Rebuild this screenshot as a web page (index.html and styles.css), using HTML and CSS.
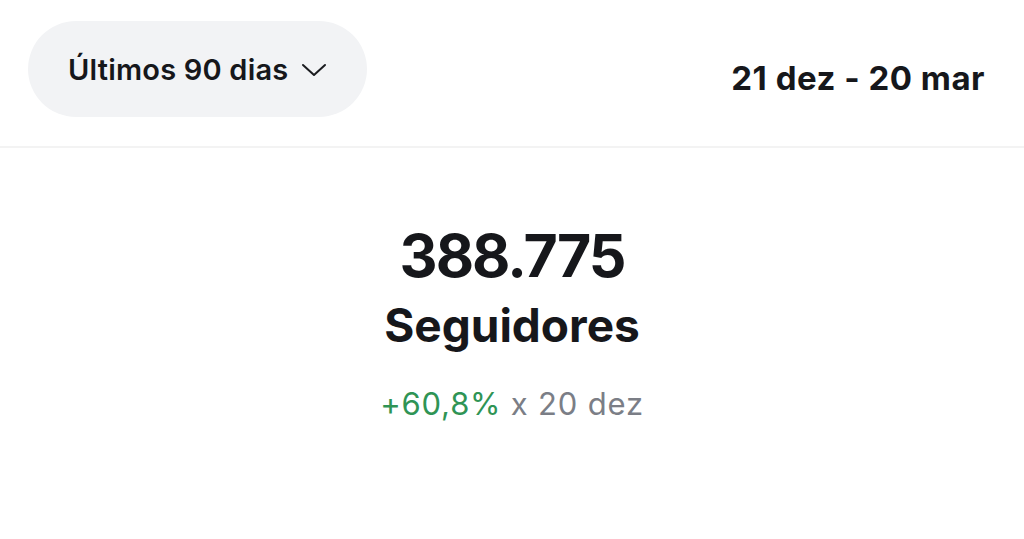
FILE: index.html
```html
<!DOCTYPE html>
<html lang="pt">
    <head>
        <meta charset="UTF-8">
        <title>Seguidores</title>
        <link rel="stylesheet" href="styles.css">
    </head>
    <body>

        <div class="topbar">
            <button class="range">
                <span>Últimos 90 dias</span>
                <svg class="chev" width="26" height="14" viewBox="0 0 26 14">
                    <path d="M2 2 L13 12 L24 2" fill="none" stroke="#1a1b1f" stroke-width="2" stroke-linecap="round" stroke-linejoin="round"/>
                </svg>
            </button>
            <div class="dates">21 dez - 20 mar</div>
        </div>

        <div class="stat">
            <div class="count">388.775</div>
            <div class="label">Seguidores</div>
            <div class="change"><span class="up">+60,8%</span> x 20 dez</div>
        </div>

    </body>
</html>
```

FILE: styles.css
```css
body {
    margin: 0;
    font-family: Inter, 'Noto Sans', sans-serif;
    background: #fff;
    color: #16171b;
}
.topbar {
    display: flex;
    justify-content: space-between;
    align-items: center;
    height: 148px;
    padding: 22px 39px 30px 28px;
    box-sizing: border-box;
    border-bottom: 2px solid #f3f3f3;
}
.range {
    display: flex;
    align-items: center;
    gap: 13px;
    height: 96px;
    padding: 0 40px;
    border: none;
    border-radius: 48px;
    background: #f2f3f5;
    font-family: inherit;
    font-size: 29px;
    font-weight: 600;
    letter-spacing: 0.2px;
    color: #16171b;
    cursor: pointer;
}
.chev {
    margin-top: 2px;
}
.dates {
    font-size: 33px;
    font-weight: 700;
    letter-spacing: 0.5px;
    margin-top: 18px;
}
.stat {
    text-align: center;
    padding-top: 68px;
}
.count {
    font-size: 59px;
    font-weight: 700;
    letter-spacing: -2px;
    line-height: 80px;
}
.label {
    font-size: 46px;
    font-weight: 700;
    line-height: 56px;
    margin-top: 1px;
}
.change {
    font-size: 31px;
    letter-spacing: 0.8px;
    color: #7b7e86;
    margin-top: 32px;
}
.up {
    color: #2f9455;
}
```
